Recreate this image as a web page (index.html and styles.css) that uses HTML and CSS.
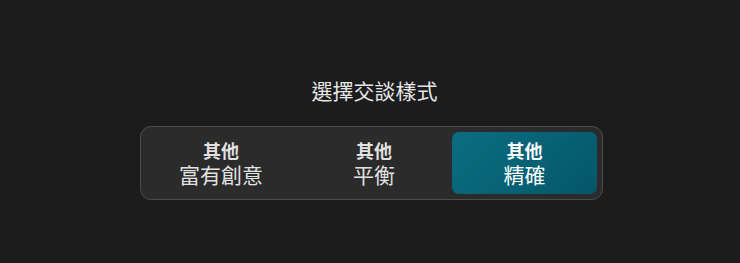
FILE: index.html
```html
<!DOCTYPE html>
<html lang="zh-Hant">

<head>
    <meta charset="UTF-8" />
    <title>選擇交談樣式</title>
    <link rel="stylesheet" href="styles.css">
</head>

<body>
    <div class="picker">
        <h2 class="picker-title">選擇交談樣式</h2>
        <div class="tone-group">
            <button class="tone-btn">
                <span class="tone-label">其他</span>
                <span class="tone-name">富有創意</span>
            </button>
            <button class="tone-btn">
                <span class="tone-label">其他</span>
                <span class="tone-name">平衡</span>
            </button>
            <button class="tone-btn active">
                <span class="tone-label">其他</span>
                <span class="tone-name">精確</span>
            </button>
        </div>
    </div>
</body>

</html>
```

FILE: styles.css
```css
* {
    box-sizing: border-box;
}

body {
    margin: 0;
    background: #1c1c1c;
    color: #e2e2e2;
    font-family: "Noto Sans CJK TC", "Noto Sans", sans-serif;
}

.picker {
    display: flex;
    flex-direction: column;
    align-items: center;
    padding-top: 76px;
}

.picker-title {
    margin: 0 0 22px 9px;
    font-size: 21px;
    line-height: 28px;
    font-weight: normal;
    color: #e6e6e6;
}

.tone-group {
    display: grid;
    grid-template-columns: repeat(3, 1fr);
    gap: 8px;
    width: 463px;
    height: 74px;
    padding: 5px;
    margin-left: 3px;
    background: #2b2b2b;
    border: 1px solid #4d4d4d;
    border-radius: 11px;
}

.tone-btn {
    display: flex;
    flex-direction: column;
    align-items: center;
    justify-content: center;
    padding: 0 0 0 5px;
    background: transparent;
    border: none;
    border-radius: 7px;
    color: #e2e2e2;
    font-family: inherit;
    cursor: pointer;
}

.tone-label {
    font-size: 18px;
    font-weight: bold;
    line-height: 23px;
}

.tone-name {
    font-size: 21px;
    line-height: 25px;
}

.tone-btn.active {
    padding: 0;
    background: linear-gradient(135deg, #0c6e81, #04566a);
    color: #ffffff;
}
```
